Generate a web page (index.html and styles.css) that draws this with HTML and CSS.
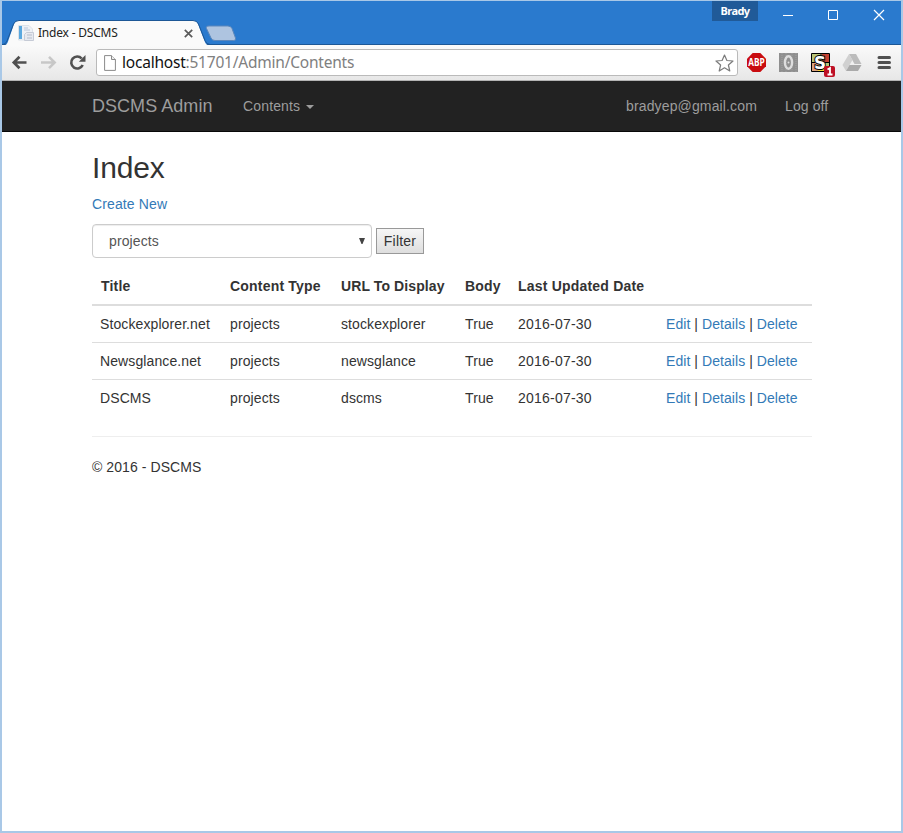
FILE: index.html
```html
<!DOCTYPE html>
<html lang="en">
<head>
<meta charset="utf-8">
<title>Index - DSCMS</title>
<link rel="stylesheet" href="styles.css">
</head>
<body>
<div class="window">
  <header class="titlebar">
    <svg class="tab-shape" width="240" height="27" viewBox="0 0 240 27">
      <path d="M0 25.500H2Q5 25 6 21.500L12 4Q13.500 .5 17 .5H191Q194.500 .5 196 4L202.500 21Q204 25.500 208 25.500H240V27H0Z" fill="#fafafa"/>
      <path d="M0 24.500H1Q4 24 5 21L11.500 4Q13 .5 17 .5H191Q195 .5 196.500 4L203 20.500Q204.500 24.500 208 24.500H240" fill="none" stroke="#1c5796"/>
      <path d="M207 6H226Q229 6 230 8.500L233.500 18Q234.500 20.500 231.500 20.500H213Q210 20.500 209 18L204.500 8.500Q203.500 6 207 6Z" fill="#aec4e0" stroke="#5c87bb"/>
    </svg>
    <div class="tab">
      <svg class="favicon" width="16" height="16" viewBox="0 0 16 16"><path d="M.5.500H11L14.500 4V15H.5Z" fill="#eef1f6" stroke="#dce2e9"/><path d="M1 1H4V14H1Z" fill="#5aa8df"/><path d="M6 3H10M6 5H12M6 12H8" stroke="#b9c6da"/><path d="M8.500 7.500H15.500V15.500H6.500V9.500Z" fill="#e7e9ef" stroke="#c6cbd6"/><path d="M9 10H14M9 13H14" stroke="#b4bdcd"/></svg>
      <span class="tab-title">Index - DSCMS</span>
      <svg class="tab-close" width="9" height="9" viewBox="0 0 9 9"><path d="M.8.800 8.200 8.200M8.200.800.8 8.200" stroke="#5a5a5a" stroke-width="1.700"/></svg>
    </div>
    <div class="user">Brady</div>
    <div class="controls">
      <svg width="104" height="12" viewBox="0 0 104 12" fill="none" stroke="#fff"><path d="M0 6.500H10"/><path d="M45.500 1.500H54.500V10.500H45.500Z"/><path d="M91 1 101 11M101 1 91 11" stroke-width="1.200"/></svg>
    </div>
  </header>

  <div class="toolbar">
    <svg class="nav-icons" width="76" height="18" viewBox="0 0 76 18" fill="none">
      <path d="M16.500 9.500H4M9.500 3.800 3.800 9.500 9.500 15.200" stroke="#505050" stroke-width="2.700"/>
      <path d="M31 9.500H44.500M39 3.800 44.700 9.500 39 15.200" stroke="#c7c7c7" stroke-width="2.500"/>
      <path d="M72.700 12A6 6 0 1 1 71.700 5.500" stroke="#505050" stroke-width="2.600"/>
      <path d="M75.500 2V8.700H68.800Z" fill="#505050"/>
    </svg>
    <div class="address">
      <svg class="page-icon" width="12" height="16" viewBox="0 0 12 16"><path d="M.6.600H7.500L11.400 4.500V15.400H.6Z" fill="#fff" stroke="#8a8a8a"/><path d="M7.500.600V4.500H11.400" fill="#eee" stroke="#8a8a8a"/></svg>
      <span class="url"><b>localhost</b><span class="path">:51701/Admin/Contents</span></span>
      <svg class="star" width="19" height="18" viewBox="0 0 19 18"><path d="M9.500 1 11.900 6.500 18 7 13.400 11 14.800 17 9.500 13.800 4.200 17 5.600 11 1 7 7.100 6.500Z" fill="#fff" stroke="#7b7b7b" stroke-width="1.200" stroke-linejoin="round"/></svg>
    </div>
    <svg class="extensions" width="146" height="27" viewBox="0 0 146 27">
      <path d="M5.700 3H13.300L19 8.700V16.300L13.300 22H5.700L0 16.300V8.700Z" fill="#c90c10"/>
      <text class="abp" x="1.300" y="16.300" textLength="16.500" lengthAdjust="spacingAndGlyphs">ABP</text>
      <path d="M32 3H51V22H32Z" fill="#8f8f8f"/>
      <path d="M35 3V22M39 3V22M45 3V22M49 3V22" stroke="#a2a2a2" stroke-dasharray="1 1"/>
      <ellipse cx="41.500" cy="12.500" rx="3.600" ry="6.200" fill="none" stroke="#dedede" stroke-width="2.400"/><circle cx="41.500" cy="12.500" r="1" fill="#dedede"/>
      <path d="M64.500 3.500H82.500V21.500H64.500Z" fill="#b8c478" stroke="#000"/>
      <path d="M75 4H82V12H75Z" fill="#c4402f"/><path d="M65 13H72V21H65Z" fill="#dda27f"/><path d="M71 17H78V21H71Z" fill="#f2d32c"/>
      <path d="M74 4V7M65 12.500H68M78 12.500H82" stroke="#000"/>
      <text class="stylish" x="67" y="19" textLength="12" lengthAdjust="spacingAndGlyphs">S</text>
      <rect x="77" y="16" width="11" height="11" rx="2" fill="#be1024"/>
      <path d="M80.500 19.500 83 18V24.500M80.500 24.500H85.500" fill="none" stroke="#fff" stroke-width="1.800"/>
      <path d="M102 4H109L114.500 14H107.500Z" fill="#bcbcbc"/><path d="M102 4 105.500 10 99 21 95.500 15Z" fill="#d0d0d0"/><path d="M102.500 15H114.500L111 21H99Z" fill="#aaa"/>
      <path d="M132 7.500H142.500M132 12.500H142.500M132 17.500H142.500" stroke="#505050" stroke-width="3" stroke-linecap="round"/>
    </svg>
  </div>

  <nav class="navbar">
    <a class="brand">DSCMS Admin</a>
    <a class="menu">Contents<i class="caret"></i></a>
    <a class="email">bradyep@gmail.com</a>
    <a class="logoff">Log off</a>
  </nav>

  <main class="content">
    <h1>Index</h1>
    <p class="create"><a>Create New</a></p>
    <div class="filter">
      <div class="select"><span>projects</span><svg width="6" height="6" viewBox="0 0 6 6"><path d="M0 0H6L3.500 6H2.500Z" fill="#444"/></svg></div>
      <button>Filter</button>
    </div>
    <table>
      <colgroup><col class="c1"><col class="c2"><col class="c3"><col class="c4"><col class="c5"><col class="c6"></colgroup>
      <thead><tr><th class="title">Title</th><th>Content Type</th><th class="url-head">URL To Display</th><th>Body</th><th>Last Updated Date</th><th></th></tr></thead>
      <tbody>
        <tr><td>Stockexplorer.net</td><td>projects</td><td>stockexplorer</td><td>True</td><td class="date">2016-07-30</td><td class="actions"><a>Edit</a> | <a>Details</a> | <a>Delete</a></td></tr>
        <tr><td>Newsglance.net</td><td>projects</td><td>newsglance</td><td>True</td><td class="date">2016-07-30</td><td class="actions"><a>Edit</a> | <a>Details</a> | <a>Delete</a></td></tr>
        <tr><td>DSCMS</td><td>projects</td><td>dscms</td><td>True</td><td class="date">2016-07-30</td><td class="actions"><a>Edit</a> | <a>Details</a> | <a>Delete</a></td></tr>
      </tbody>
    </table>
    <footer>© 2016 - DSCMS</footer>
  </main>
</div>
</body>
</html>
```
FILE: styles.css
```css
* { box-sizing: border-box; }
body { margin: 0; font: 14px/20px "Liberation Sans", Arial, sans-serif; color: #333; overflow: hidden; }
.window { width: 903px; height: 833px; border: 1px solid #a9c8e7; border-width: 1px 2px 2px; background: #fff; white-space: nowrap; }
.titlebar { position: relative; display: flex; height: 44px; background: #2a7ace; border-bottom: 1px solid #1c5796; }
.tab-shape { position: absolute; left: 0; top: 19px; }
.tab { position: relative; display: flex; align-items: center; width: 204px; height: 24px; margin-top: 20px; padding-left: 16px; }
.tab-title { width: 146px; margin-left: 4px; font: 12px/16px "Noto Sans", sans-serif; color: #222; letter-spacing: -.2px; }
.user { width: 46px; height: 20px; margin-left: 506px; background: #205a98; color: #fff; font: bold 11px/20px "Noto Sans", sans-serif; text-align: center; letter-spacing: -.6px; }
.controls { margin: 8px 0 0 25px; }
.controls svg { display: block; }
.toolbar { position: relative; display: flex; align-items: flex-start; height: 36px; padding: 4px 0 0 8px; background: linear-gradient(#fafafa, #e7e7e7); border-bottom: 1px solid #b4b4b4; }
.nav-icons { flex: none; margin-top: 4px; }
.address { display: flex; align-items: center; width: 642px; height: 27px; margin-left: 10px; padding: 0 3px 0 7px; border: 1px solid #bababa; border-radius: 3px; background: #fff; }
.url { flex: 1; margin-left: 6px; font: 15.500px/24px "Noto Sans", sans-serif; color: #808080; letter-spacing: -.22px; transform: translateY(-1px); }
.url b { font-weight: normal; color: #111; }
.extensions { flex: none; margin: 1px 0 0 9px; }
.abp { font: bold 10px "Open Sans", sans-serif; fill: #fff; }
.stylish { font: bold 18px "DejaVu Sans", sans-serif; fill: #fff; stroke: #000; stroke-width: 2px; paint-order: stroke; }
.navbar { display: flex; align-items: center; height: 51px; padding-left: 90px; background: #222; border-bottom: 1px solid #080808; color: #9d9d9d; }
.brand { width: 151px; font-size: 18px; letter-spacing: .04px; }
.menu { display: flex; align-items: center; width: 383px; letter-spacing: .15px; }
.caret { margin: 2px 0 0 6px; border: 4px solid transparent; border-top-color: #9d9d9d; border-bottom: 0; }
.email { width: 159px; letter-spacing: .14px; }
.logoff { letter-spacing: .1px; }
.content { width: 720px; margin-left: 90px; padding-top: 20px; }
h1 { margin: 0; font-size: 30px; line-height: 32px; font-weight: 400; letter-spacing: -.15px; }
a { color: #337ab7; }
.navbar a { color: #9d9d9d; }
.create { margin: 10px 0 0; letter-spacing: .12px; }
.filter { display: flex; align-items: center; margin-top: 10px; height: 34px; gap: 4px; }
.select { display: flex; align-items: center; justify-content: space-between; width: 280px; height: 34px; padding: 0 6px 0 16px; border: 1px solid #ccc; border-radius: 4px; color: #555; letter-spacing: .12px; box-shadow: inset 0 1px 1px rgba(0,0,0,.075); }
button { width: 48px; height: 26px; padding: 0; border: 1px solid #999; border-radius: 0; background: linear-gradient(#f6f6f6, #dedede); color: #333; font: 14px/20px "Liberation Sans", sans-serif; letter-spacing: .2px; }
table { width: 720px; margin-top: 10px; table-layout: fixed; border-collapse: separate; border-spacing: 0; }
.c1 { width: 130px; } .c2 { width: 111px; } .c3 { width: 124px; } .c4 { width: 53px; } .c5 { width: 148px; } .c6 { width: 154px; }
th { height: 38px; padding: 8px; border-bottom: 2px solid #ddd; text-align: left; letter-spacing: .2px; }
th.title { padding-left: 9px; }
th.url-head { letter-spacing: .1px; }
td { height: 37px; padding: 8px; border-top: 1px solid #ddd; letter-spacing: .1px; }
td.date { letter-spacing: .22px; }
td.actions { letter-spacing: .06px; }
tbody tr:first-child td { height: 36px; border-top: 0; }
footer { margin-top: 20px; padding-top: 20px; border-top: 1px solid #eee; letter-spacing: .08px; }
```
